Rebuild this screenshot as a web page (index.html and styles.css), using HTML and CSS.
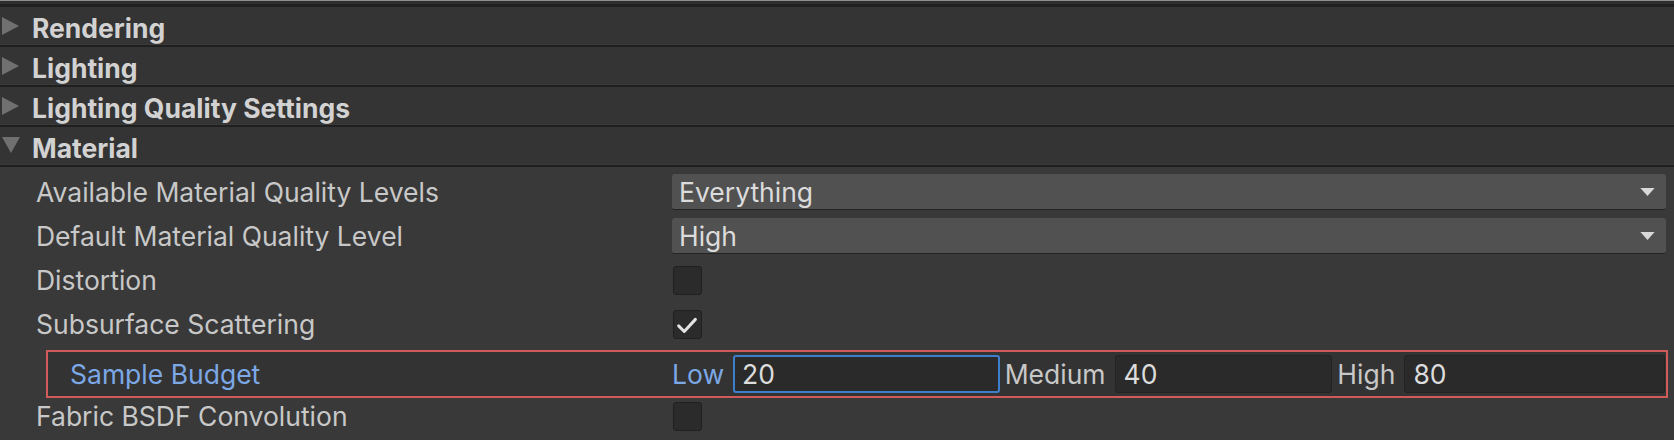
FILE: index.html
```html
<!DOCTYPE html>
<html lang="en">
<head>
    <meta charset="UTF-8">
    <meta name="viewport" content="width=device-width, initial-scale=1.0">
    <title>HDRP Global Settings</title>
    <link rel="stylesheet" href="styles.css">
</head>
<body>
<div id="inspector">
    <div class="panel-edge"></div>

    <div class="section-header">
        <svg class="foldout" viewBox="0 0 18 20"><polygon points="0,1 17,10 0,19"/></svg>
        <span class="section-title">Rendering</span>
    </div>
    <div class="section-header">
        <svg class="foldout" viewBox="0 0 18 20"><polygon points="0,1 17,10 0,19"/></svg>
        <span class="section-title">Lighting</span>
    </div>
    <div class="section-header">
        <svg class="foldout" viewBox="0 0 18 20"><polygon points="0,1 17,10 0,19"/></svg>
        <span class="section-title">Lighting Quality Settings</span>
    </div>
    <div class="section-header open">
        <svg class="foldout" viewBox="0 0 18 20"><polygon points="0,1 18,1 9,17"/></svg>
        <span class="section-title">Material</span>
    </div>

    <div class="prop-list">
        <div class="prop-row">
            <span class="prop-label">Available Material Quality Levels</span>
            <div class="prop-value">
                <div class="dropdown">
                    <span>Everything</span>
                    <svg class="dropdown-arrow" viewBox="0 0 16 9"><polygon points="0,0 16,0 8,9"/></svg>
                </div>
            </div>
        </div>
        <div class="prop-row">
            <span class="prop-label">Default Material Quality Level</span>
            <div class="prop-value">
                <div class="dropdown">
                    <span>High</span>
                    <svg class="dropdown-arrow" viewBox="0 0 16 9"><polygon points="0,0 16,0 8,9"/></svg>
                </div>
            </div>
        </div>
        <div class="prop-row">
            <span class="prop-label">Distortion</span>
            <div class="prop-value">
                <div class="checkbox"></div>
            </div>
        </div>
        <div class="prop-row">
            <span class="prop-label">Subsurface Scattering</span>
            <div class="prop-value">
                <div class="checkbox">
                    <svg viewBox="0 0 29 29"><polyline points="5,16 11,22 23,9"/></svg>
                </div>
            </div>
        </div>

        <!-- nested under Subsurface Scattering -->
        <div class="prop-row highlighted">
            <span class="prop-label nested changed">Sample Budget</span>
            <div class="prop-value multi-field">
                <div class="field-cell">
                    <span class="field-label changed">Low</span>
                    <div class="int-field focused">20</div>
                </div>
                <div class="field-cell">
                    <span class="field-label">Medium</span>
                    <div class="int-field">40</div>
                </div>
                <div class="field-cell">
                    <span class="field-label">High</span>
                    <div class="int-field">80</div>
                </div>
            </div>
        </div>

        <div class="prop-row last">
            <span class="prop-label">Fabric BSDF Convolution</span>
            <div class="prop-value">
                <div class="checkbox"></div>
            </div>
        </div>
    </div>
</div>
</body>
</html>
```

FILE: styles.css
```css
html, body {
    margin: 0;
    padding: 0;
    height: 440px;
    overflow: hidden;
}

body {
    background-color: #393939;
    color: #c8c8c8;
    font-family: Inter, "Noto Sans", sans-serif;
    font-size: 26.5px;
}

.panel-edge {
    height: 7px;
    border-top: 1px solid #8e8e8e;
    border-bottom: 3px solid #202020;
    background-color: #2e2e2e;
    box-sizing: border-box;
}

.section-header {
    height: 38px;
    display: flex;
    align-items: center;
    gap: 12px;
    padding-left: 2px;
    background-color: #343434;
    border-bottom: 2px solid #1f1f1f;
    box-shadow: inset 0 -1px 0 #3a3a3a;
}

.foldout {
    width: 18px;
    height: 20px;
    fill: #707070;
    flex: none;
}

.section-title {
    font-weight: 700;
    color: #d2d2d2;
    padding-top: 3px;
}

.prop-list {
    padding-top: 3px;
}

.prop-row {
    display: flex;
    align-items: center;
    height: 44px;
    padding: 0 8px 0 36px;
}

.prop-label {
    width: 636px;
    flex: none;
    white-space: nowrap;
}

.prop-value {
    flex: 1;
    display: flex;
    align-items: center;
}

.dropdown {
    flex: 1;
    height: 36px;
    display: flex;
    align-items: center;
    justify-content: space-between;
    padding: 0 11px 0 7px;
    background-color: #515151;
    border-radius: 3px;
    border-bottom: 1px solid #242424;
    color: #dcdcdc;
    box-sizing: border-box;
}

.dropdown-arrow {
    width: 15px;
    height: 8px;
    fill: #d8d8d8;
}

.checkbox {
    width: 29px;
    height: 29px;
    background-color: #2b2b2b;
    border: 1px solid #202020;
    border-radius: 3px;
    box-sizing: border-box;
    margin-left: 1px;
}

.checkbox svg {
    width: 27px;
    height: 27px;
    fill: none;
    stroke: #e4e4e4;
    stroke-width: 3.2;
    stroke-linecap: round;
    stroke-linejoin: round;
}

/* the red frame around the budget row */
.prop-row.highlighted {
    height: 44px;
    margin: 4px 6px 0 46px;
    padding: 0 1px 0 22px;
    border: 2px solid #cf5b5b;
    background-color: #333333;
}

.prop-label.nested {
    width: 602px;
}

.changed {
    color: #7ca8e6;
}

.multi-field {
    gap: 5px;
}

.field-cell {
    flex: 1 1 0;
    display: flex;
    align-items: center;
    gap: 9px;
}

.field-label {
    flex: none;
}

.int-field {
    flex: 1;
    height: 38px;
    display: flex;
    align-items: center;
    padding-left: 8px;
    background-color: #2a2a2a;
    border: 1px solid #232323;
    border-radius: 3px;
    color: #dcdcdc;
    box-sizing: border-box;
}

.int-field.focused {
    border: 2px solid #3d7fcc;
    padding-left: 7px;
}

.prop-row.last {
    height: 36px;
}
```
